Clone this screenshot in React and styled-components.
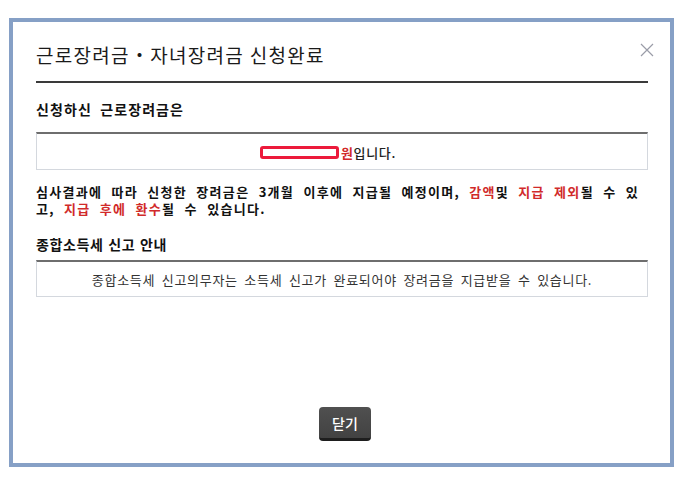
import React from "react";
import styled, { createGlobalStyle } from "styled-components";

const GlobalStyle = createGlobalStyle`
  html, body {
    margin: 0;
    padding: 0;
    background: #fff;
  }
  body {
    font-family: "Noto Sans CJK KR", "Noto Sans", sans-serif;
    color: #111;
  }
`;

const Page = styled.div`
  padding: 18px 0 0 9px;
`;

const Frame = styled.div`
  position: relative;
  box-sizing: border-box;
  width: 665px;
  height: 449px;
  border: 4px solid #86a0c6;
  padding: 21px 22px 0 23px;
  display: flex;
  flex-direction: column;
`;

const Header = styled.div`
  display: flex;
  align-items: center;
  border-bottom: 2px solid #3a3a3a;
  padding-bottom: 14px;
`;

const Title = styled.h1`
  margin: 0;
  font-size: 19px;
  font-weight: 400;
  line-height: 24px;
  color: #1a1a1a;
  letter-spacing: 1.3px;
`;

const CloseButton = styled.button`
  position: absolute;
  top: 20px;
  right: 15px;
  width: 16px;
  height: 16px;
  padding: 0;
  border: 0;
  background: none;
  cursor: pointer;
`;

const SectionTitle = styled.h2`
  margin: ${(p) => p.$top}px 0 0;
  font-size: 14px;
  font-weight: 700;
  line-height: 18px;
  letter-spacing: ${(p) => p.$ls}px;
  word-spacing: ${(p) => p.$ws}px;
  color: #111;
`;

const InfoBox = styled.div`
  box-sizing: border-box;
  margin-top: ${(p) => p.$top}px;
  height: ${(p) => p.$height || 37}px;
  border: 1px solid #d4d8de;
  border-top: 2px solid #6e6e6e;
  display: flex;
  align-items: center;
  justify-content: center;
  font-size: 13px;
  color: #333;
  letter-spacing: 0.7px;
  word-spacing: 3px;
`;

const Censor = styled.span`
  display: inline-block;
  box-sizing: border-box;
  width: 79px;
  height: 13px;
  border: 3px solid #ec1a3b;
  border-radius: 3px;
  background: #fff;
  margin-right: 2px;
`;

const Amount = styled.span`
  display: flex;
  align-items: center;
  font-weight: 500;
  color: #222;
  margin-right: 28px;
  margin-top: 2px;
`;

const Red = styled.span`
  color: #d12a2a;
  font-weight: ${(p) => (p.$bold ? 700 : "inherit")};
`;

const Notice = styled.p`
  margin: 13px 0 0;
  font-size: 13px;
  font-weight: 700;
  line-height: 17px;
  letter-spacing: 1.3px;
  word-spacing: 5px;
  color: #111;
`;

const Footer = styled.div`
  margin-top: auto;
  padding-bottom: 22px;
  display: flex;
  justify-content: center;
`;

const DarkButton = styled.button`
  box-sizing: border-box;
  width: 52px;
  height: 34px;
  padding: 0;
  border: 0;
  border-bottom: 3px solid #1e1e1e;
  border-radius: 4px;
  background: linear-gradient(#505050, #424242);
  color: #fff;
  font-family: "Noto Sans CJK KR", sans-serif;
  font-size: 14px;
  font-weight: 500;
  cursor: pointer;
  margin-left: 6px;
`;

export default function App() {
  return (
    <>
      <GlobalStyle />
      <Page>
        <Frame>
          <Header>
            <Title>근로장려금・자녀장려금 신청완료</Title>
          </Header>
          <CloseButton aria-label="닫기">
            <svg width="16" height="16" viewBox="0 0 16 16">
              <path d="M2 2L14 14M14 2L2 14" stroke="#9a9ca8" strokeWidth="1.2" />
            </svg>
          </CloseButton>

          <SectionTitle $top={17} $ls={1.1} $ws={4}>신청하신 근로장려금은</SectionTitle>
          <InfoBox $top={14} $height={38}>
            <Amount>
              <Censor />
              <Red $bold>원</Red>입니다.
            </Amount>
          </InfoBox>

          <Notice>
            심사결과에 따라 신청한 장려금은 3개월 이후에 지급될 예정이며, <Red>감액</Red>및{" "}
            <Red>지급 제외</Red>될 수 있고, <Red>지급 후에 환수</Red>될 수 있습니다.
          </Notice>

          <SectionTitle $top={18} $ls={0.6} $ws={1}>종합소득세 신고 안내</SectionTitle>
          <InfoBox $top={7}>
            종합소득세 신고의무자는 소득세 신고가 완료되어야 장려금을 지급받을 수 있습니다.
          </InfoBox>

          <Footer>
            <DarkButton>닫기</DarkButton>
          </Footer>
        </Frame>
      </Page>
    </>
  );
}
